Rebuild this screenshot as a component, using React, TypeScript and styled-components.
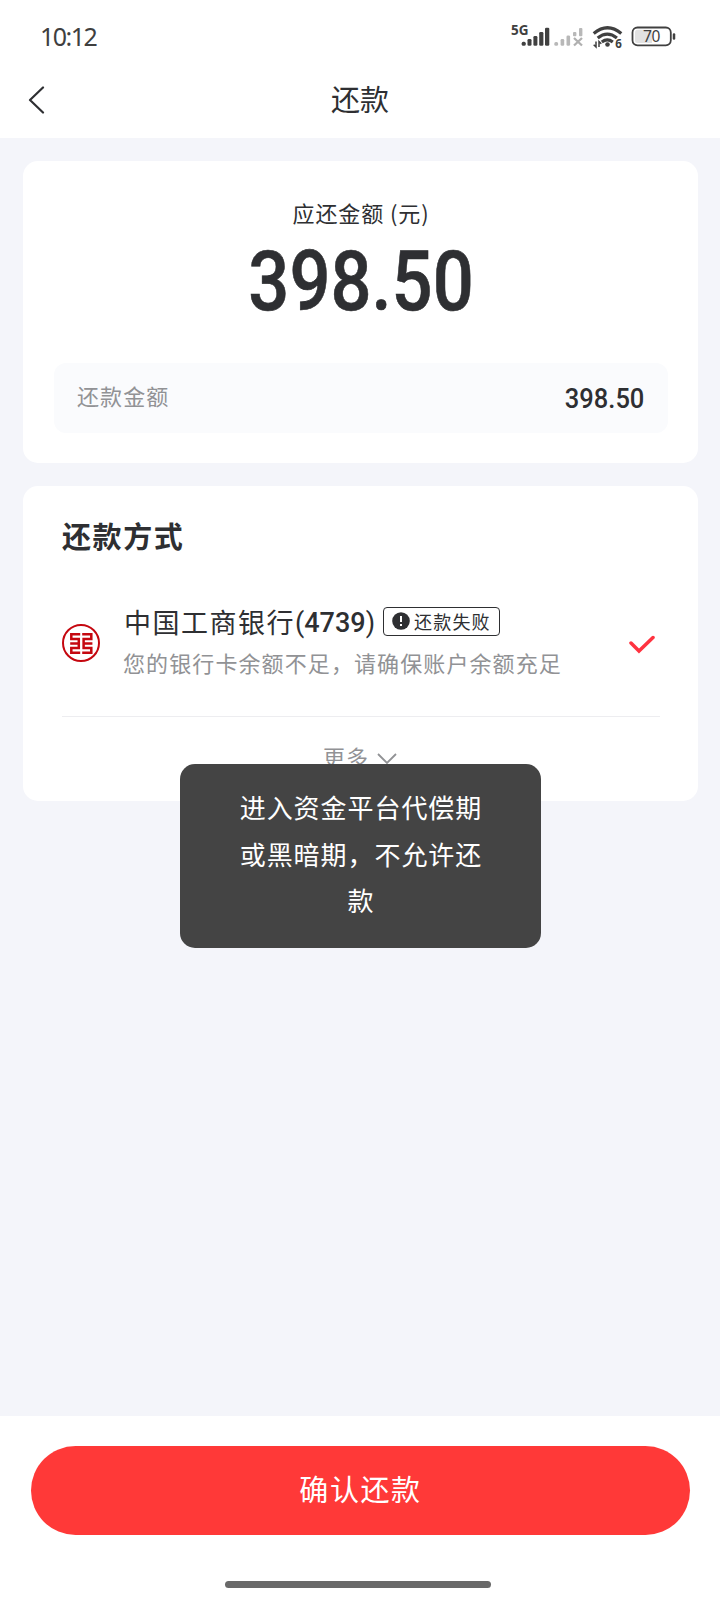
import React from "react";
import styled, { createGlobalStyle } from "styled-components";

const GlobalStyle = createGlobalStyle`
  * { box-sizing: border-box; }
  body { margin: 0; background: #f4f5fa; font-family: "Noto Sans CJK SC", sans-serif; color: #2e2f32; }
  h1, h2, p { margin: 0; font-weight: 400; }
`;

const Screen = styled.main`
  display: flex;
  flex-direction: column;
  height: 1600px;
  width: 720px;
`;

const StatusBar = styled.div`
  height: 64px;
  padding: 8px 44px 0 40px;
  background: #fff;
  display: flex;
  align-items: center;
  justify-content: space-between;
`;

const Clock = styled.span`
  font: 400 25px/34px "Noto Sans", sans-serif;
  letter-spacing: -1.5px;
  color: #3f3f3f;
`;

const NavBar = styled.header`
  height: 74px;
  background: #fff;
  display: grid;
  grid-template-columns: 72px 1fr 72px;
  align-items: center;
  padding-bottom: 2px;
`;

const BackButton = styled.button`
  border: 0;
  padding: 0 0 0 28px;
  background: none;
  display: flex;
`;

const Title = styled.h1`
  font-size: 29px;
  line-height: 40px;
  padding-bottom: 4px;
  text-align: center;
`;

const Content = styled.div`
  flex: 1;
  display: flex;
  flex-direction: column;
  gap: 23px;
  padding: 23px 22px 0 23px;
`;

const Card = styled.section<{ $height: number }>`
  height: ${(p) => p.$height}px;
  background: #fff;
  border-radius: 15px;
`;

const AmountCard = styled(Card)`
  padding: 35px 30px 0 31px;
  display: flex;
  flex-direction: column;
  align-items: center;
`;

const AmountLabel = styled.p`
  font-size: 22px;
  line-height: 32px;
  letter-spacing: 0.9px;
`;

const Digits = styled.span<{ $size: number; $weight?: number; $stretch: number; $origin?: string }>`
  display: inline-block;
  font-family: Roboto, sans-serif;
  font-size: ${(p) => p.$size}px;
  font-weight: ${(p) => p.$weight ?? 500};
  line-height: 1;
  transform: scaleX(${(p) => p.$stretch});
  transform-origin: ${(p) => p.$origin ?? "center"};
`;

const Paren = styled.span`
  font-weight: 400;
`;

const TotalAmount = styled(Digits)`
  margin-top: 12px;
  -webkit-text-stroke: 0.6px currentColor;
`;

const FieldAmount = styled(Digits)`
  margin-top: 2px;
`;

const AmountField = styled.div`
  width: 100%;
  height: 70px;
  margin-top: 39px;
  padding: 0 24px 0 23px;
  border-radius: 12px;
  background: #fafbfd;
  display: flex;
  align-items: center;
  justify-content: space-between;
`;

const FieldLabel = styled.span`
  font-size: 22px;
  line-height: 32px;
  margin-bottom: 7px;
  letter-spacing: 1.1px;
  color: #919295;
`;

const MethodCard = styled(Card)`
  padding: 28px 38px 0 39px;
`;

const SectionTitle = styled.h2`
  font-size: 29px;
  font-weight: 700;
  line-height: 42px;
  letter-spacing: 1.6px;
`;

const BankRow = styled.div`
  height: 161px;
  padding-top: 46px;
  border-bottom: 1.5px solid #ededf0;
  display: flex;
`;

const BankLogo = styled.svg`
  margin-top: 22px;
  flex: none;
`;

const BankInfo = styled.div`
  flex: 1;
  margin-left: 24px;
`;

const BankName = styled.div`
  display: flex;
  align-items: center;
  height: 38px;
  font-size: 27px;
  letter-spacing: 1.5px;
  white-space: nowrap;
`;

const CardNumber = styled.span`
  width: 88px;
  height: 38px;
  display: flex;
  align-items: center;
  padding-top: 3px;
  letter-spacing: 0;
`;

const StatusTag = styled.span`
  width: 117px;
  height: 29px;
  margin-top: 1px;
  border: 1.5px solid #2e2f32;
  border-radius: 4px;
  display: flex;
  align-items: center;
  gap: 4px;
  padding: 0 0 1px 8px;
  font-size: 18px;
  letter-spacing: 1.2px;
`;

const Hint = styled.p`
  margin: 5px 0 0 -1px;
  font-size: 22px;
  line-height: 34px;
  letter-spacing: 1.1px;
  color: #919295;
  white-space: nowrap;
`;

const CheckMark = styled.svg`
  margin: 33px 5px 0 0;
  flex: none;
`;

const MoreButton = styled.div`
  display: flex;
  justify-content: center;
  align-items: center;
  gap: 8px;
  padding: 23px 2px 0 0;
  font-size: 22px;
  line-height: 32px;
  letter-spacing: 0.9px;
  color: #919295;
`;

const MoreArrow = styled.svg`
  margin-top: 6px;
`;

const Toast = styled.div`
  position: absolute;
  left: 180px;
  top: 764px;
  width: 361px;
  height: 184px;
  padding: 20px 55.5px 0 56.5px;
  border-radius: 15px;
  background: #444;
  color: #fff;
  font-size: 26px;
  line-height: 46.5px;
  letter-spacing: 0.95px;
  text-align: center;
`;

const Footer = styled.footer`
  height: 184px;
  background: #fff;
  padding: 30px 30px 0 31px;
  display: flex;
  flex-direction: column;
  align-items: center;
`;

const ConfirmButton = styled.button`
  width: 100%;
  height: 89px;
  border: 0;
  border-radius: 45px;
  background: #ff3938;
  color: #fff;
  font-family: inherit;
  font-size: 29px;
  letter-spacing: 1.6px;
  padding: 0 0 5px;
`;

const HomeIndicator = styled.div`
  width: 266px;
  height: 7px;
  margin: 46px 5px 0 0;
  border-radius: 4px;
  background: #696969;
`;

const StatusIcons = () => (
  <svg width="166" height="34" viewBox="510 19 166 34" fill="none">
    <text x="511" y="35" fontSize="13.500" fontWeight="700" fontFamily="Noto Sans" fill="#404040">5G</text>
    <g fill="#404040">
      <rect x="521.700" y="41.700" width="4" height="4" rx="1.500" />
      <rect x="527.500" y="39" width="4" height="6.700" rx="1.300" />
      <rect x="533.400" y="36" width="4" height="9.700" rx="1.300" />
      <rect x="539.200" y="32" width="4.200" height="13.700" rx="1.300" />
      <rect x="545" y="27.700" width="4.300" height="18" rx="1.300" />
    </g>
    <g fill="#b8b8b8">
      <rect x="554.300" y="42" width="3.800" height="3.700" rx="1.500" />
      <rect x="560.600" y="39" width="3.600" height="6.700" rx="1.300" />
      <rect x="566.500" y="35.500" width="3.600" height="10.200" rx="1.300" />
      <rect x="573" y="32" width="3.400" height="4.200" rx="1" />
      <rect x="579" y="28" width="3.400" height="8.200" rx="1" />
    </g>
    <path d="M574 38l8 7.500M582 38l-8 7.500" stroke="#b0b0b0" strokeWidth="2.300" />
    <g stroke="#404040" strokeWidth="3.200">
      <path d="M593.700 33.500q13.800-11.500 27.600 0M597.700 38q9.600-7.800 19.200 0M601.800 42q5.500-4.200 11 0" />
    </g>
    <circle cx="607.500" cy="44.500" r="2.300" fill="#404040" />
    <path d="M596 41.500v5.500l-2.300-2.300M599 47v-5.500l2.300 2.300" stroke="#404040" strokeWidth="1.500" />
    <text x="615.300" y="47.500" fontSize="11.500" fontWeight="700" fontFamily="Noto Sans" fill="#404040">6</text>
    <rect x="632.500" y="27.500" width="38.300" height="17.800" rx="5" stroke="#404040" strokeWidth="1.800" />
    <path d="M637.500 29.700h14.500v13.400h-14.500q-2.500 0-2.500-2.500v-8.400q0-2.500 2.500-2.500z" fill="#e2e2e2" />
    <path d="M674 34.500v4" stroke="#404040" strokeWidth="2.500" strokeLinecap="round" />
    <text x="651.500" y="42.200" fontSize="15.500" letterSpacing="-0.3" fontFamily="Noto Sans" textAnchor="middle" fill="#404040">70</text>
  </svg>
);

export default function App() {
  return (
    <Screen>
      <GlobalStyle />
      <StatusBar>
        <Clock>10:12</Clock>
        <StatusIcons />
      </StatusBar>
      <NavBar>
        <BackButton aria-label="返回">
          <svg width="17" height="28" viewBox="0 0 17 28" fill="none" stroke="#2e2f32" strokeWidth="2.2" strokeLinecap="round" strokeLinejoin="round">
            <path d="M15 1.500L2 14l13 12.500" />
          </svg>
        </BackButton>
        <Title>还款</Title>
      </NavBar>
      <Content>
        <AmountCard $height={302}>
          <AmountLabel>应还金额 (元)</AmountLabel>
          <TotalAmount $size={84} $weight={500} $stretch={0.86}>398.50</TotalAmount>
          <AmountField>
            <FieldLabel>还款金额</FieldLabel>
            <FieldAmount $size={28} $stretch={0.91} $origin="right">398.50</FieldAmount>
          </AmountField>
        </AmountCard>
        <MethodCard $height={315}>
          <SectionTitle>还款方式</SectionTitle>
          <BankRow>
            <BankLogo width="38" height="38" viewBox="0 0 38 38" fill="none" stroke="#c5070f">
              <circle cx="19" cy="19" r="18" strokeWidth="2" />
              <path d="M18.200 10.300H9.300V15H16.800V24H9.300V28.700H18.200M16.800 19.500H8.200M20.200 10.300H29.300V15H21.600V24H29.300V28.700H20.200M21.600 19.500H30.400" strokeWidth="2.500" />
            </BankLogo>
            <BankInfo>
              <BankName>
                中国工商银行
                <CardNumber><Digits $size={28} $stretch={0.965} $origin="left"><Paren>(</Paren>4739<Paren>)</Paren></Digits></CardNumber>
                <StatusTag>
                  <svg width="18" height="18" viewBox="0 0 18 18">
                    <circle cx="9" cy="9" r="8.800" fill="#2e2f32" />
                    <path d="M9 4v6M9 12v2" stroke="#fff" strokeWidth="2" />
                  </svg>
                  还款失败
                </StatusTag>
              </BankName>
              <Hint>您的银行卡余额不足，请确保账户余额充足</Hint>
            </BankInfo>
            <CheckMark width="26" height="19" viewBox="0 0 26 19" fill="none" stroke="#ff3340" strokeWidth="3.5" strokeLinecap="round">
              <path d="M2 8l8 8L24 2.500" />
            </CheckMark>
          </BankRow>
          <MoreButton>
            更多
            <MoreArrow width="20" height="12" viewBox="0 0 20 12" fill="none" stroke="#919295" strokeWidth="1.800">
              <path d="M1 1l9 9 9-9" />
            </MoreArrow>
          </MoreButton>
        </MethodCard>
      </Content>
      <Footer>
        <ConfirmButton>确认还款</ConfirmButton>
        <HomeIndicator />
      </Footer>
      <Toast>进入资金平台代偿期或黑暗期，不允许还款</Toast>
    </Screen>
  );
}
